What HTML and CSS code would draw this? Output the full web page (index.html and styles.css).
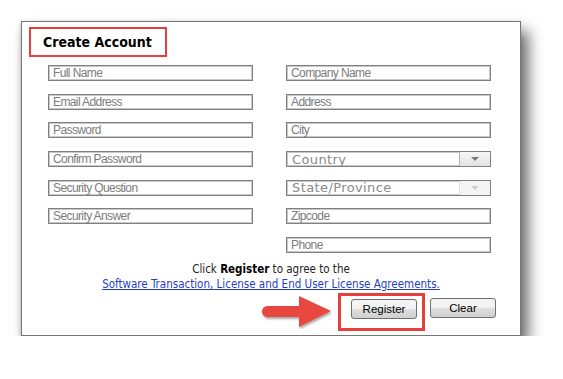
FILE: index.html
```html
<!DOCTYPE html>
<html lang="en">
<head>
    <meta charset="UTF-8">
    <title>Create Account</title>
    <link rel="stylesheet" href="styles.css">
</head>
<body>

    <div class="panel">
        <h2 class="title">Create Account</h2>

        <div class="fields">
            <div class="column">
                <input type="text" placeholder="Full Name">
                <input type="text" placeholder="Email Address">
                <input type="password" placeholder="Password">
                <input type="password" placeholder="Confirm Password">
                <input type="text" placeholder="Security Question">
                <input type="text" placeholder="Security Answer">
            </div>
            <div class="column">
                <input type="text" placeholder="Company Name">
                <input type="text" placeholder="Address">
                <input type="text" placeholder="City">
                <div class="select">
                    <span>Country</span>
                    <span class="drop"><i></i></span>
                </div>
                <div class="select disabled">
                    <span>State/Province</span>
                    <span class="drop"><i></i></span>
                </div>
                <input type="text" placeholder="Zipcode">
                <input type="text" placeholder="Phone">
            </div>
        </div>

        <p class="agree">
            Click <b>Register</b> to agree to the<br>
            <a href="#">Software Transaction, License and End User License Agreements.</a>
        </p>

        <div class="actions">
            <span class="highlight">
                <svg class="arrow" width="72" height="34" viewBox="0 0 72 34">
                    <defs>
                        <filter id="drop" x="-20%" y="-20%" width="140%" height="150%">
                            <feDropShadow dx="1" dy="2" stdDeviation="1.2" flood-color="#000" flood-opacity="0.35"/>
                        </filter>
                    </defs>
                    <g fill="#e8463f" filter="url(#drop)">
                        <rect x="1" y="11" width="42" height="11" rx="5.5"/>
                        <polygon points="38,1 70,16 38,32"/>
                    </g>
                </svg>
                <button type="button">Register</button>
                <span class="mark"></span>
            </span>
            <button type="button">Clear</button>
        </div>
    </div>

</body>
</html>
```

FILE: styles.css
```css
:root {
    --red: #e5403b;
    --field-border: #808080;
    --placeholder: #7c7c7c;
    --link: #1f3fc4;
}

body {
    margin: 0;
    padding: 21px 0 0 21px;
    background-color: #fff;
    font-family: "DejaVu Sans Condensed", "Liberation Sans", sans-serif;
    color: #222;
}

.panel {
    box-sizing: border-box;
    width: 500px;
    height: 315px;
    background-color: #fff;
    border: 1px solid #777;
    box-shadow: 7px 10px 14px rgba(0, 0, 0, 0.6), -1px 1px 4px rgba(0, 0, 0, 0.15);
    padding-top: 5px;
}

.title {
    box-sizing: border-box;
    width: 138px;
    height: 30px;
    margin: 0 0 0 7px;
    padding-left: 12px;
    border: 2px solid var(--red);
    font-size: 14px;
    font-weight: bold;
    line-height: 26px;
    color: #000;
}

.fields {
    display: flex;
    gap: 33px;
    margin-top: 8px;
    padding-left: 26px;
}

.column {
    display: flex;
    flex-direction: column;
    gap: 12.7px;
}

input {
    box-sizing: border-box;
    width: 205px;
    height: 16px;
    margin: 0;
    padding: 0 0 0 4px;
    border: 1px solid var(--field-border);
    box-shadow: inset 0 0 0 1px #c8c8c8;
    font-family: "Liberation Sans", sans-serif;
    font-size: 12px;
    letter-spacing: -0.6px;
    outline: none;
}

input::placeholder {
    color: var(--placeholder);
}

.select {
    box-sizing: border-box;
    display: flex;
    align-items: center;
    justify-content: space-between;
    width: 205px;
    height: 16px;
    padding-left: 5px;
    border: 1px solid var(--field-border);
    box-shadow: inset 0 0 0 1px #c8c8c8;
    font-family: "DejaVu Sans", sans-serif;
    font-size: 13px;
    letter-spacing: 0.4px;
    color: #8a8a8a;
    overflow: hidden;
}

.drop {
    display: flex;
    align-items: center;
    justify-content: center;
    width: 30px;
    height: 100%;
    border-left: 1px solid #b4b4b4;
    background: linear-gradient(#f6f6f6, #e2e2e2);
}

.drop i {
    width: 0;
    height: 0;
    border-left: 4px solid transparent;
    border-right: 4px solid transparent;
    border-top: 4px solid #7a7a7a;
}

.disabled .drop {
    border-left-color: #e0e0e0;
    background: #f4f4f4;
}

.disabled .drop i {
    border-top-color: #d0d0d0;
}

.agree {
    margin: 9px 0 0;
    text-align: center;
    font-size: 11.5px;
    line-height: 15px;
    color: #222;
}

.agree b {
    color: #000;
}

.agree a {
    color: var(--link);
}

.actions {
    display: flex;
    justify-content: flex-end;
    gap: 13px;
    margin-top: 6px;
    padding-right: 24px;
}

button {
    box-sizing: border-box;
    width: 66px;
    height: 20px;
    padding: 0;
    border: 1px solid #707070;
    border-radius: 3px;
    background: linear-gradient(#f3f3f3 45%, #dddddd 55%, #d0d0d0);
    font-family: "Liberation Sans", sans-serif;
    font-size: 11.5px;
    color: #000;
}

.highlight {
    position: relative;
    display: block;
}

.mark {
    position: absolute;
    left: -13px;
    top: -5px;
    width: 87px;
    height: 38px;
    box-sizing: border-box;
    border: 3px solid var(--red);
}

.arrow {
    position: absolute;
    left: -90px;
    top: -3px;
}
```
